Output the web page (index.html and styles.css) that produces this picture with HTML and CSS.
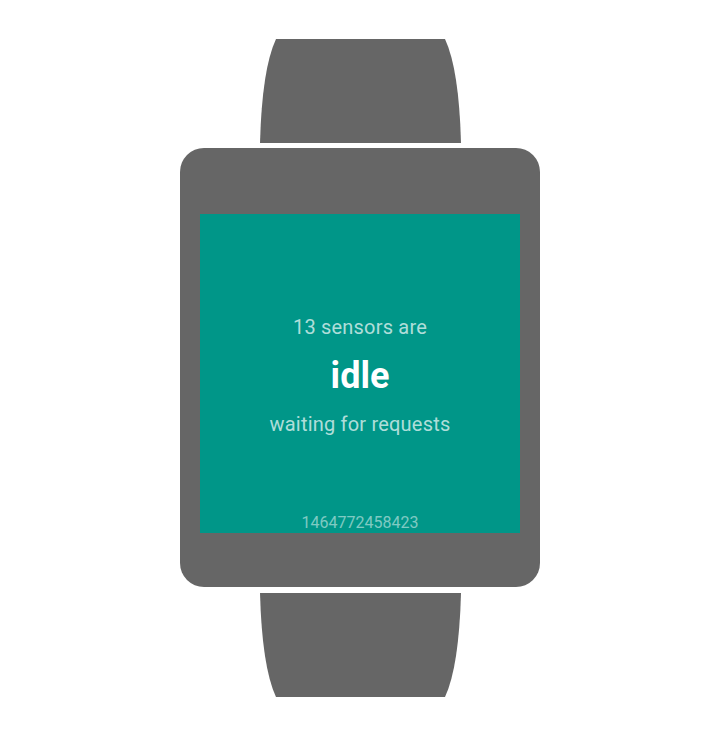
FILE: index.html
```html
<!DOCTYPE html>
<html>
<head>
<meta charset="utf-8">
<link rel="stylesheet" href="styles.css">
</head>
<body>
<div class="page">
  <svg class="strap" width="201" height="104" viewBox="0 0 201 104">
    <path d="M16,0 L185,0 Q199,30 201,104 L0,104 Q2,30 16,0 Z" fill="#666666"/>
  </svg>
  <div class="body">
    <div class="screen">
      <div class="main">
        <div class="line1">13 sensors are</div>
        <div class="state">idle</div>
        <div class="line3">waiting for requests</div>
      </div>
      <div class="stamp">1464772458423</div>
    </div>
  </div>
  <svg class="strap strap-bottom" width="201" height="104" viewBox="0 0 201 104">
    <path d="M0,0 L201,0 Q199,74 185,104 L16,104 Q2,74 0,0 Z" fill="#666666"/>
  </svg>
</div>
</body>
</html>
```

FILE: styles.css
```css
html, body {
  margin: 0;
  padding: 0;
  background: #ffffff;
}
.page {
  width: 720px;
  height: 749px;
  display: flex;
  flex-direction: column;
  align-items: center;
  padding-top: 39px;
  box-sizing: border-box;
  gap: 5px;
  font-family: Roboto, "Liberation Sans", sans-serif;
}
.strap {
  display: block;
}
.strap-bottom {
  margin-top: 1px;
}
.body {
  width: 360px;
  height: 439px;
  background: #666666;
  border-radius: 24px;
  padding: 66px 20px 54px;
  box-sizing: border-box;
}
.screen {
  width: 320px;
  height: 319px;
  background: #009688;
  display: flex;
  flex-direction: column;
  align-items: center;
}
.main {
  display: flex;
  flex-direction: column;
  align-items: center;
  margin-top: 101px;
  flex: 1;
}
.line1 {
  font-size: 20px;
  letter-spacing: 0.2px;
  line-height: 24px;
  color: rgba(255,255,255,0.7);
}
.state {
  font-size: 36px;
  font-weight: 700;
  line-height: 48px;
  color: #ffffff;
  margin-top: 13px;
}
.line3 {
  font-size: 20px;
  letter-spacing: 0.2px;
  line-height: 24px;
  color: rgba(255,255,255,0.7);
  margin-top: 12px;
}
.stamp {
  font-size: 16px;
  line-height: 20px;
  color: rgba(255,255,255,0.5);
  margin-bottom: 0;
}
```
